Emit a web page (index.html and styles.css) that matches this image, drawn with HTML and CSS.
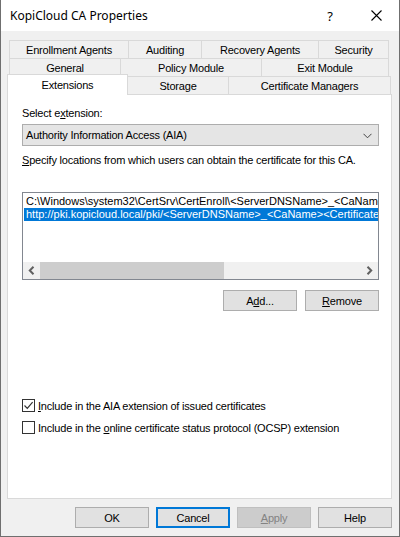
FILE: index.html
```html
<!DOCTYPE html>
<html>
<head>
<meta charset="utf-8">
<link rel="stylesheet" href="styles.css">
</head>
<body>
<div class="window">
  <div class="titlebar">
    <span class="title">KopiCloud CA Properties</span>
    <span class="tb-btn help">?</span>
    <span class="tb-btn close"><svg width="11" height="11" viewBox="0 0 11 11"><path d="M0.5 0.5 L10.5 10.5 M10.5 0.5 L0.5 10.5" stroke="#000" stroke-width="1.1" fill="none"/></svg></span>
  </div>
  <div class="body">
    <div class="tabs">
      <div class="tabrow r1">
        <div class="tab w-enroll">Enrollment Agents</div>
        <div class="tab w-audit">Auditing</div>
        <div class="tab w-recov">Recovery Agents</div>
        <div class="tab w-sec">Security</div>
      </div>
      <div class="tabrow r2">
        <div class="tab w-gen">General</div>
        <div class="tab w-pol">Policy Module</div>
        <div class="tab w-exit">Exit Module</div>
      </div>
      <div class="tabrow r3">
        <div class="tab selected w-ext">Extensions</div>
        <div class="tab w-stor">Storage</div>
        <div class="tab w-cert">Certificate Managers</div>
      </div>
    </div>
    <div class="panel">
      <div class="label first">Select e<u>x</u>tension:</div>
      <div class="combo">
        <span class="combo-text">Authority Information Access (AIA)</span>
        <svg class="chev" width="9" height="6" viewBox="0 0 9 6"><path d="M0.5 0.8 L4.5 4.8 L8.5 0.8" stroke="#444" stroke-width="1" fill="none"/></svg>
      </div>
      <div class="label desc"><u>S</u>pecify locations from which users can obtain the certificate for this CA.</div>
      <div class="listbox">
        <div class="rows">
          <div class="row">C:\Windows\system32\CertSrv\CertEnroll\&lt;ServerDNSName&gt;_&lt;CaName&gt;&lt;CertificateName&gt;.crt</div>
          <div class="row sel">http://pki.kopicloud.local/pki/&lt;ServerDNSName&gt;_&lt;CaName&gt;&lt;CertificateName&gt;.crt</div>
        </div>
        <div class="hscroll">
          <span class="arrow"><svg width="7" height="9" viewBox="0 0 7 9"><path d="M5.5 0.8 L1.8 4.5 L5.5 8.2" stroke="#606060" stroke-width="2" fill="none"/></svg></span>
          <div class="track"><div class="thumb"></div></div>
          <span class="arrow"><svg width="7" height="9" viewBox="0 0 7 9"><path d="M1.5 0.8 L5.2 4.5 L1.5 8.2" stroke="#606060" stroke-width="2" fill="none"/></svg></span>
        </div>
      </div>
      <div class="btnrow">
        <div class="btn">A<u>d</u>d...</div>
        <div class="btn"><u>R</u>emove</div>
      </div>
      <div class="check first-check">
        <span class="box checked"><svg width="11" height="11" viewBox="0 0 11 11"><path d="M1.5 5.5 L4.3 8.3 L9.6 2.2" stroke="#333" stroke-width="1.2" fill="none"/></svg></span>
        <span><u>I</u>nclude in the AIA extension of issued certificates</span>
      </div>
      <div class="check">
        <span class="box"></span>
        <span>Include in the <u>o</u>nline certificate status protocol (OCSP) extension</span>
      </div>
    </div>
    <div class="footer">
      <div class="btn">OK</div>
      <div class="btn focused">Cancel</div>
      <div class="btn disabled"><u>A</u>pply</div>
      <div class="btn">Help</div>
    </div>
  </div>
</div>
</body>
</html>
```

FILE: styles.css
```css
* { box-sizing: border-box; }
html, body { margin: 0; padding: 0; background: #fff; }
body {
  font-family: "Liberation Sans", Arial, sans-serif;
  font-size: 11px;
  letter-spacing: -0.2px;
  color: #000;
}
u { text-decoration: underline; text-underline-offset: 1px; }

.window {
  width: 400px;
  height: 537px;
  border: 1px solid #6f6f6f;
  border-top: none;
  background: #f0f0f0;
  display: flex;
  flex-direction: column;
}

.titlebar {
  height: 31px;
  background: #fff;
  display: flex;
  align-items: center;
  flex: none;
}
.title {
  flex: 1;
  padding-left: 9px;
  font-family: "Noto Sans", "Open Sans", sans-serif;
  font-size: 12px;
  letter-spacing: 0;
  padding-bottom: 1px;
}
.tb-btn {
  width: 46px;
  height: 31px;
  display: flex;
  align-items: center;
  justify-content: center;
}
.help {
  font-family: "Noto Sans", sans-serif;
  font-size: 13px;
  letter-spacing: 0;
}

.body {
  flex: 1;
  display: flex;
  flex-direction: column;
  padding: 0 7px 0 6px;
}

.tabs {
  margin-top: 9px;
  display: flex;
  flex-direction: column;
}
.tabrow {
  display: flex;
  height: 18px;
  align-items: flex-start;
}
.r1, .r2 { margin-left: 2px; }
.tab {
  height: 18px;
  border: 1px solid #d9d9d9;
  border-bottom: none;
  background: #f0f0f0;
  display: flex;
  align-items: center;
  justify-content: center;
  margin-left: -1px;
  white-space: nowrap;
}
.tab:first-child { margin-left: 0; }
.r3 .tab { padding-top: 1px; }
.tab.selected {
  position: relative;
  z-index: 1;
  height: 21px;
  margin-top: -2px;
  background: #fff;
  padding-top: 0;
  padding-bottom: 1px;
}
.w-enroll { width: 120px; }
.w-audit { width: 74px; }
.w-recov { width: 118px; }
.w-sec { width: 71px; }
.w-gen { width: 112px; }
.w-pol { width: 142px; }
.w-exit { width: 128px; }
.w-ext { width: 121px; }
.w-stor { width: 102px; }
.w-cert { width: 163px; }

.panel {
  height: 405px;
  flex: none;
  background: #fff;
  border: 1px solid #d9d9d9;
  padding: 12px 12px 0 14px;
  display: flex;
  flex-direction: column;
}
.label {
  height: 13px;
  line-height: 13px;
  white-space: nowrap;
}
.combo {
  margin-top: 4px;
  height: 22px;
  background: #e5e5e5;
  border: 1px solid #adadad;
  display: flex;
  align-items: center;
  padding: 0 6px 0 3px;
}
.combo-text { flex: 1; }
.chev { margin-top: 1px; }
.desc { margin-top: 8px; }

.listbox {
  margin-top: 25px;
  height: 88px;
  border: 1px solid #828790;
  background: #fff;
  display: flex;
  flex-direction: column;
}
.rows {
  flex: 1;
  padding: 2px 0 0 1px;
  overflow: hidden;
}
.row {
  height: 13px;
  line-height: 13px;
  white-space: nowrap;
  overflow: hidden;
  padding-left: 2px;
  letter-spacing: 0;
}
.row.sel {
  background: #0078d7;
  color: #fff;
}
.hscroll {
  height: 17px;
  display: flex;
  background: #f0f0f0;
  flex: none;
}
.arrow {
  width: 17px;
  display: flex;
  align-items: center;
  justify-content: center;
}
.track {
  flex: 1;
  display: flex;
}
.thumb {
  width: 184px;
  background: #cdcdcd;
}

.btnrow {
  margin-top: 10px;
  display: flex;
  justify-content: flex-end;
  gap: 8px;
}
.btn {
  width: 74px;
  height: 21px;
  background: #e1e1e1;
  border: 1px solid #adadad;
  display: flex;
  align-items: center;
  justify-content: center;
}
.btn.focused { border: 2px solid #0078d7; }
.btn.disabled {
  background: #cccccc;
  border-color: #bfbfbf;
  color: #838383;
}

.check {
  display: flex;
  align-items: center;
  height: 15px;
  gap: 3px;
  margin-top: 7px;
  white-space: nowrap;
}
.first-check { margin-top: 87px; }
.box {
  width: 13px;
  height: 13px;
  border: 1px solid #333;
  background: #fff;
  flex: none;
  display: flex;
  align-items: center;
  justify-content: center;
}

.footer {
  margin-top: 8px;
  display: flex;
  justify-content: flex-end;
  gap: 7px;
  padding-right: 0;
}
```
